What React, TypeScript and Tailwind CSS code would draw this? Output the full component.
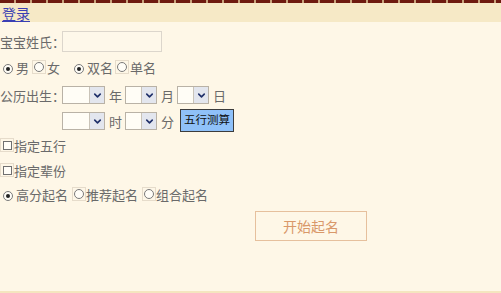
import { ChevronDown } from 'lucide-react';

const Radio = ({ checked, boxed }: { checked?: boolean; boxed?: boolean }) => (
  <span
    className={`inline-flex h-[14px] w-[14px] items-center justify-center ${boxed ? 'border border-[#e6dccb]' : ''}`}
  >
    <span className="flex h-[10px] w-[10px] items-center justify-center rounded-full border border-[#7a7a7a] bg-[#fffdf7]">
      {checked && <span className="h-[4px] w-[4px] rounded-full bg-[#222]" />}
    </span>
  </span>
);

const Check = () => (
  <span className="inline-flex h-[14px] w-[14px] items-center justify-center border border-[#e6dccb]">
    <span className="h-[9px] w-[9px] border border-[#6f6f6f] bg-[#fffdf7]" />
  </span>
);

const Select = ({ w }: { w: string }) => (
  <span className={`inline-flex h-[18px] ${w} border border-[#b9b2a6] bg-[#fffdf6]`}>
    <span className="flex-1" />
    <span className="flex w-[15px] items-center justify-center border-l border-[#c9c3b8] bg-[#e3e6ee]">
      <ChevronDown className="h-[11px] w-[11px] text-[#20306a]" strokeWidth={3.5} />
    </span>
  </span>
);

const App = () => {
  return (
    <div
      className="flex h-[293px] w-[501px] flex-col bg-[#fef7e7] text-[13px] leading-none text-[#6a6a6a]"
      style={{ fontFamily: '"Noto Sans CJK SC", "Noto Sans", sans-serif' }}
    >
      <div className="h-[3px] bg-[repeating-linear-gradient(90deg,#6e1a0e_0_14px,#c8a37b_14px_16px)]" />
      <div className="flex h-[19px] items-center bg-[#f6e9c6] pl-[2px]">
        <a href="#" className="text-[14px] text-[#3a3fb4] underline underline-offset-2">
          登录
        </a>
      </div>

      <div className="flex flex-col pt-[9px]">
        <div className="flex h-[21px] items-center">
          <span>宝宝姓氏：</span>
          <span className="ml-[-3px] h-[21px] w-[100px] border border-[#dcd6cc] bg-[#fef8ea]" />
        </div>

        <div className="mt-[6px] flex h-[18px] items-center">
          <span className="ml-[1px]"><Radio checked /></span>
          <span className="ml-[1px]">男</span>
          <span className="ml-[3px]"><Radio boxed /></span>
          <span className="ml-[1px]">女</span>
          <span className="ml-[12px]"><Radio checked /></span>
          <span className="ml-[1px]">双名</span>
          <span className="ml-[2px]"><Radio boxed /></span>
          <span className="ml-[1px]">单名</span>
        </div>

        <div className="mt-[10px] flex h-[18px] items-center">
          <span>公历出生：</span>
          <span className="ml-[-3px]"><Select w="w-[43px]" /></span>
          <span className="ml-[4px]">年</span>
          <span className="ml-[3px]"><Select w="w-[32px]" /></span>
          <span className="ml-[4px]">月</span>
          <span className="ml-[3px]"><Select w="w-[32px]" /></span>
          <span className="ml-[4px]">日</span>
        </div>

        <div className="mt-[5px] flex h-[22px] items-center pl-[62px]">
          <span className="mt-[2px]"><Select w="w-[43px]" /></span>
          <span className="ml-[4px] mt-[2px]">时</span>
          <span className="ml-[3px] mt-[2px]"><Select w="w-[32px]" /></span>
          <span className="ml-[4px] mt-[2px]">分</span>
          <button className="ml-[6px] flex h-[23px] w-[54px] items-center justify-center border border-[#3c3c3c] bg-[#8fc1f9] text-[11.5px] text-[#111]">
            五行测算
          </button>
        </div>

        <div className="mt-[5px] flex h-[18px] items-center">
          <Check />
          <span>指定五行</span>
        </div>

        <div className="mt-[7px] flex h-[18px] items-center">
          <Check />
          <span>指定辈份</span>
        </div>

        <div className="mt-[6px] flex h-[18px] items-center">
          <span className="ml-[1px]"><Radio checked /></span>
          <span className="ml-[1px]">高分起名</span>
          <span className="ml-[4px]"><Radio boxed /></span>
          <span>推荐起名</span>
          <span className="ml-[4px]"><Radio boxed /></span>
          <span>组合起名</span>
        </div>

        <div className="mt-[8px] flex pl-[255px]">
          <button className="flex h-[30px] w-[112px] items-center justify-center border border-[#e6c09d] bg-[#fef7e7] text-[14px] text-[#d9986a]">
            开始起名
          </button>
        </div>
      </div>

      <div className="flex-1" />
      <div className="h-[2px] bg-[#f4e6bf]" />
    </div>
  );
};

export default App;
